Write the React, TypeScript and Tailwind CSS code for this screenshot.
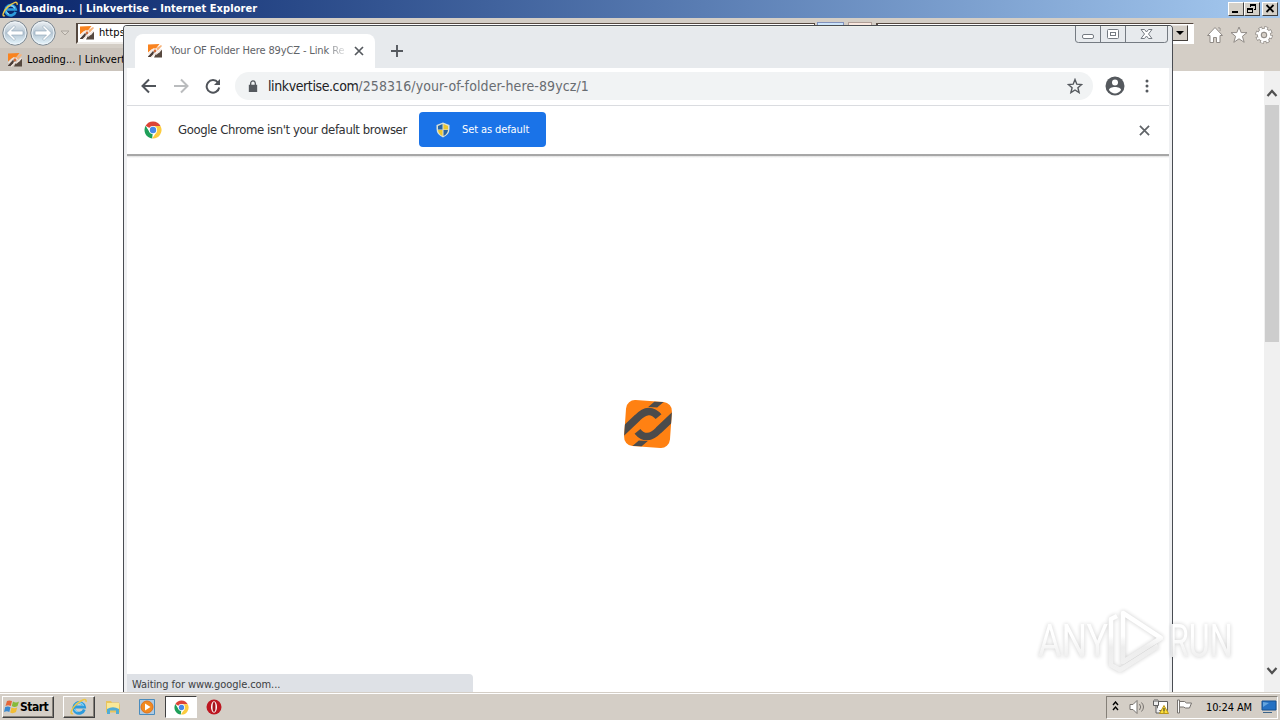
import React from "react";

function LinkIcon({ className = "" }: { className?: string }) {
  return (
    <svg viewBox="0 0 16 16" className={"size-4 shrink-0 " + className}>
      <path d="M1 1.500 12.500 1 9 5.500 5 6 1 9.500z" fill="#f9831f" />
      <path d="M15 14.500H7l2-4 3-.5 3-3.500z" fill="#57493f" />
      <path d="M1 13.500 6 8l2 2-4 4H1z" fill="#4b3d37" />
      <path d="m9.500 5 4.500-3 1 1-4.500 5z" fill="#f6b27a" />
      <path d="M1.500 11 6.500 5.800l2.500.4 1.500 2M14.500 6l-5 5-3-1M4 14.500l4-4" fill="none" stroke="#f3e6de" strokeWidth="1.100" />
      <circle cx="8" cy="8" r="1.400" fill="#ce6b3a" />
    </svg>
  );
}

function IELogo({ className = "" }: { className?: string }) {
  return (
    <svg viewBox="0 0 18 18" className={"shrink-0 " + className}>
      <path d="M14.300 11.500A5.400 5.400 0 1 1 14.500 9H5" fill="none" stroke="#2d9bdc" strokeWidth="2.900" />
      <path d="M13.500 8A4.600 4.600 0 0 0 5 7.500M4.500 11a5 5 0 0 0 3 3" fill="none" stroke="#80d3fa" strokeWidth="1.200" />
      <path d="M3 15.500C-.5 17 1 11 6 6.500S17-1 16 4" fill="none" stroke="#ecc646" strokeWidth="1.500" />
    </svg>
  );
}

function ChromeLogo({ className = "" }: { className?: string }) {
  return (
    <svg viewBox="0 0 18 18" className={"shrink-0 " + className}>
      <path d="M9 9 1.600 4.800A8.500 8.500 0 0 1 16.500 5H9z" fill="#dc4437" />
      <path d="M9 9 8.200 17.460A8.500 8.500 0 0 1 1.600 4.800L5.500 11z" fill="#1e9f59" />
      <path d="M9 9V5h7.500A8.500 8.500 0 0 1 8.200 17.460L12.500 11z" fill="#fccc3f" />
      <circle cx="9" cy="9" r="4.100" fill="#fff" />
      <circle cx="9" cy="9" r="3.200" fill="#4688e8" />
    </svg>
  );
}

function NavCircle({ flip = false }: { flip?: boolean }) {
  return (
    <svg viewBox="0 0 26 26" className={flip ? "size-[26px] -scale-x-100" : "size-[26px]"}>
      <defs>
        <linearGradient id="orb" x2="0" y2="1">
          <stop stopColor="#edf1f4" />
          <stop offset=".5" stopColor="#b5c5d2" />
          <stop offset="1" stopColor="#e8f8ff" />
        </linearGradient>
      </defs>
      <circle cx="13" cy="13" r="12.200" fill="url(#orb)" stroke="#7d8790" />
      <circle cx="13" cy="13" r="11" fill="none" stroke="#eef4f8" />
      <path d="m12 5.500-7.500 7.500 7.500 7.500 1.500-1.500-4-4H21v-4H9.500l4-4z" fill="#fff" stroke="#8ca2b5" strokeWidth=".6" />
    </svg>
  );
}

function IEButton({ kind }: { kind: "min" | "restore" | "close" }) {
  return (
    <div className="flex h-[14px] w-4 items-center justify-center border border-t-white border-l-white border-r-[#404040] border-b-[#404040] bg-[#d4d0c8]">
      <svg viewBox="0 0 14 12" className="h-3 w-[14px] shrink-0" fill="none" stroke="#000" shapeRendering="crispEdges">
        {kind === "min" && <path d="M3 9h6" strokeWidth="2" />}
        {kind === "restore" && <path d="M5.500 4V1.500h5v5H9M5 2h6M2.500 5.500h5v4h-5zM2 6h6" />}
        {kind === "close" && <path d="m3.500 2 7 7m0-7-7 7" strokeWidth="1.800" shapeRendering="auto" />}
      </svg>
    </div>
  );
}

function Explorer() {
  return (
    <div className="flex h-[692px] w-full flex-col">
      <div className="flex h-[18px] items-center bg-linear-to-r from-[#0a246a] to-[#a6caf0] pr-[2px] pl-[2px]">
        <IELogo className="size-[17px]" />
        <span className="flex-1 pt-px text-[11px] font-bold tracking-[0.07px] whitespace-nowrap text-white">Loading... | Linkvertise - Internet Explorer</span>
        <IEButton kind="min" />
        <IEButton kind="restore" />
        <div className="ml-[2px]"><IEButton kind="close" /></div>
      </div>
      <div className="flex h-[30px] items-start bg-[#d4cec6] pt-[2px]">
        <div className="flex w-[76px] shrink-0 items-center gap-[2px] pl-[2px]">
          <NavCircle />
          <NavCircle flip />
          <svg viewBox="0 0 10 7" className="ml-[2px] h-[7px] w-[10px] shrink-0"><path d="m1 1 4 4 4-4z" fill="#ddd8d0" stroke="#aaa49d" /></svg>
        </div>
        <div className="mt-[3px] flex h-[21px] w-[739px] shrink-0 items-center border-2 border-t border-r border-[#55483f] border-b-[#efece8] bg-white">
          <LinkIcon className="ml-px" />
          <span className="ml-1 pt-px text-[11px] tracking-[0.1px]">https:</span>
        </div>
        <div className="mt-[2px] ml-[2px] flex h-3 shrink-0 gap-[4px]">
          <div className="w-[27px] border border-[#8292bc] bg-[#cce5fb]" />
          <div className="w-[24px] border border-[#b09f97] bg-[#f9e8df]" />
        </div>
        <div className="mt-[3px] ml-1 flex h-[21px] w-[318px] shrink-0 justify-end border-2 border-t border-r border-[#55483f] border-r-white border-b-white bg-white">
          <div className="mt-px mr-[5px] flex h-[16px] w-[16px] items-center justify-center border border-[#e9e5e1] border-r-[#45403c] border-b-[#45403c] bg-[#d4cec6]">
            <svg viewBox="0 0 8 5" className="h-[5px] w-2"><path d="M0 0h8L4 4z" /></svg>
          </div>
        </div>
        <div className="mt-[6px] ml-[12px] flex shrink-0 gap-[6px]">
          <svg viewBox="0 0 18 18" className="size-[18px]" fill="#fff" stroke="#908b86"><path d="m1.500 9.500 7.500-8 7.500 8H14v7h-3.500v-5h-3v5H4v-7zM12 2h2v3" /></svg>
          <svg viewBox="0 0 18 18" className="size-[18px]" fill="#fff" stroke="#908b86"><path d="m9 1 2.200 5.600h5.800l-4.600 3.700 1.800 6L9 12.800l-5.200 3.500 1.800-6L1 6.600h5.800z" /></svg>
          <svg viewBox="0 0 18 18" className="ml-px size-[18px]" fill="none">
            <circle cx="9" cy="9" r="5" stroke="#908b86" strokeWidth="4" />
            <circle cx="9" cy="9" r="7" stroke="#908b86" strokeWidth="3.500" strokeDasharray="3.600 1.900" />
            <circle cx="9" cy="9" r="7" stroke="#fff" strokeWidth="2" strokeDasharray="2.400 3.100" strokeDashoffset="-.6" />
            <circle cx="9" cy="9" r="4.700" stroke="#fff" strokeWidth="3" />
            <circle cx="9" cy="9" r="2.700" fill="#d4cec6" stroke="#908b86" />
          </svg>
        </div>
      </div>
      <div className="flex h-[23px] items-center bg-[#d4cec6]">
        <div className="flex h-full w-[180px] items-center bg-[#cbc4bc] pl-[7px]">
          <LinkIcon />
          <span className="ml-1 pt-[2px] text-[11px] tracking-[-0.02px] whitespace-nowrap text-black">Loading... | Linkvertise</span>
        </div>
      </div>
      <div className="flex min-h-0 flex-1 justify-end bg-white">
        <div className="flex w-4 flex-col items-center bg-[#f0f0f0]">
          <svg viewBox="0 0 16 34" className="h-[34px] w-4"><path d="m3.500 25 4.500-5 4.500 5" fill="none" stroke="#505050" strokeWidth="2.200" /></svg>
          <div className="h-[237px] w-[14px] bg-[#cdcdcd]" />
          <div className="flex-1" />
          <svg viewBox="0 0 16 30" className="h-[30px] w-4"><path d="m3.500 6 4.500 5 4.500-5" fill="none" stroke="#505050" strokeWidth="2.200" /></svg>
        </div>
      </div>
    </div>
  );
}

function ChromeTabs() {
  return (
    <div className="flex h-[42px] items-start border-t border-[#eef1ea] bg-[#e7eaed]">
      <div className="mt-[7px] ml-[11px] flex h-[34px] w-[240px] items-center rounded-t-[8px] bg-white pr-[11px] pl-[12px]">
        <LinkIcon />
        <div className="ml-[7px] pt-px text-[11px] tracking-[-0.13px] whitespace-nowrap text-[#5f6368]">
          Your OF Folder Here 89yCZ - Link <span className="bg-linear-to-r from-[#8d9094] to-[#dddedf] bg-clip-text text-transparent">Re</span>
        </div>
        <svg viewBox="0 0 10 10" className="ml-auto size-[10px] shrink-0"><path d="m1 1 8 8m0-8-8 8" stroke="#55595e" strokeWidth="1.700" /></svg>
      </div>
      <svg viewBox="0 0 14 14" className="mt-[17px] ml-[15px] size-[14px]"><path d="M7 1v12M1 7h12" stroke="#55595e" strokeWidth="1.900" /></svg>
      <svg viewBox="0 0 94 18" className="-mt-px mr-[3px] ml-auto h-[18px] w-[94px]" fill="none" stroke="#757b82">
        <path d="M.5 0v14q0 2.500 3 2.500h86q3 0 3-2.500V0M25.500 0v16M50.500 0v16" />
        <rect x="7.500" y="8.500" width="11" height="4" rx="1.500" fill="#fff" />
        <rect x="32.500" y="3.500" width="11" height="9" rx="1" fill="#fff" />
        <rect x="35.500" y="6.500" width="5" height="3" />
        <path d="M66 3.500h3.500l2 2.500 2-2.500H77L73.500 8l3.500 4.500h-3.500l-2-2.500-2 2.500H66L69.500 8z" fill="#fff" />
      </svg>
    </div>
  );
}

function ChromeToolbar() {
  return (
    <div className="flex h-[38px] shrink-0 items-center border-b border-[#dadce0] bg-white pl-[14px]">
      <svg viewBox="0 0 16 16" className="mb-[2px] size-4" fill="none" stroke="#50545a" strokeWidth="2"><path d="M15 8H2m6-6.500L1.500 8 8 14.500" /></svg>
      <svg viewBox="0 0 16 16" className="mb-[2px] ml-4 size-4" fill="none" stroke="#babcbe" strokeWidth="2"><path d="M1 8h13M8 1.500 14.500 8 8 14.500" /></svg>
      <svg viewBox="0 0 16 16" className="mb-[2px] ml-4 size-4"><path d="M13 4.600A6.300 6.300 0 1 0 14.200 9.500" fill="none" stroke="#50545a" strokeWidth="2" /><path d="M15 1v6H9z" fill="#50545a" /></svg>
      <div className="mb-px ml-[14px] flex h-7 w-[858px] items-center rounded-full bg-[#f1f3f4] pr-[10px] pl-[12px]">
        <svg viewBox="0 0 12 14" className="h-[13px] w-3"><path d="M1.500 5h9v8h-9z" fill="#55595e" /><path d="M3.500 6V3.500a2.500 2.500 0 0 1 5 0V6" fill="none" stroke="#55595e" strokeWidth="1.400" /></svg>
        <span className="ml-[9px] text-[14px] tracking-[-0.4px] whitespace-nowrap text-[#202124]">linkvertise.com<span className="tracking-[0.1px] text-[#686c71]">/258316/your-of-folder-here-89ycz/1</span></span>
        <svg viewBox="0 0 16 16" className="ml-auto size-4"><path d="m8 1.500 1.800 4.700 4.900.3-3.800 3.200 1.200 4.900L8 12l-4.100 2.600 1.200-4.900-3.800-3.200 4.900-.3z" fill="none" stroke="#55595e" strokeWidth="1.400" /></svg>
      </div>
      <svg viewBox="0 0 20 20" className="mb-[2px] ml-[12px] size-5"><circle cx="10" cy="10" r="9.500" fill="#55595e" /><circle cx="10" cy="6.500" r="3" fill="#fff" /><path d="M4 14c0-4 12-4 12 0-3 4.500-9 4.500-12 0" fill="#fff" /></svg>
      <svg viewBox="0 0 4 16" className="mb-px ml-[20px] h-4 w-1" fill="#55595e"><circle cx="2" cy="3" r="1.500" /><circle cx="2" cy="8" r="1.500" /><circle cx="2" cy="13" r="1.500" /></svg>
    </div>
  );
}

function DefaultBrowserBar() {
  return (
    <div className="flex h-[50px] shrink-0 items-center border-b-2 border-[#a7a7a7] bg-white pr-[19px] pl-[17px]">
      <ChromeLogo className="size-[18px]" />
      <span className="ml-[16px] w-[241px] text-[13px] tracking-[-0.39px] whitespace-nowrap text-[#303134]">Google Chrome isn't your default browser</span>
      <div className="mb-[1px] flex h-[35px] w-[127px] items-center rounded-[4px] bg-[#1a73e8] pl-[17px] text-white">
        <svg viewBox="0 0 14 16" className="h-4 w-[14px]"><path d="M7 .5 13.500 3v4q0 5.500-6.500 8.500Q.5 12.500.5 7V3z" fill="#dbe1d6" /><path d="M6.500 2v5.500H2V4zM7.500 8H12q-.5 4-4.500 6z" fill="#2865a4" /><path d="M7.500 2v5.500H12V4zM6.500 8H2q.5 4 4.500 6z" fill="#ebc631" /></svg>
        <span className="ml-[12px] pt-px text-[11px] tracking-[-0.1px] whitespace-nowrap">Set as default</span>
      </div>
      <svg viewBox="0 0 12 12" className="ml-auto size-[11px]"><path d="m1 1 10 10m0-10L1 11" stroke="#606468" strokeWidth="1.900" /></svg>
    </div>
  );
}

function ChromeWindow() {
  return (
    <div className="absolute top-[25px] left-[123px] flex h-[667px] w-[1050px] flex-col overflow-hidden rounded-t-[4px] border border-b-0 border-[#494c52] bg-[#eff0f2]">
      <ChromeTabs />
      <div className="mx-[3px] flex min-h-0 flex-1 flex-col bg-white">
        <ChromeToolbar />
        <DefaultBrowserBar />
        <div className="h-[2px] shrink-0 bg-linear-to-b from-[#dedede] to-white" />
        <div className="flex min-h-0 flex-1 flex-col">
          <svg viewBox="0 0 50 50" className="mt-[241px] size-[50px] shrink-0 self-center">
            <defs><clipPath id="tile"><rect x="2" y="2" width="46" height="46" rx="9" /></clipPath></defs>
            <g transform="rotate(4 25 25)">
              <rect x="2" y="2" width="46" height="46" rx="9" fill="#ff8112" />
              <g clipPath="url(#tile)" fill="none" stroke="#4b4b4b" strokeWidth="7.500">
                <path d="M-2 37 14 19.500q11-13 21-2.500" />
                <path d="M52 13 36 30.500q-11 13-21 2.500" />
                <path d="M24 8 30 2h9l-6 6zM26 42l-6 6h-9l6-6z" fill="#4b4b4b" stroke="none" />
              </g>
            </g>
          </svg>
          <div className="mt-auto flex h-[18px] w-[346px] items-center rounded-tr-[4px] bg-[#dee1e6] pt-[4px] pl-[5px] text-[11px] tracking-[-0.08px] text-[#3c4043]">Waiting for www.google.com...</div>
        </div>
      </div>
    </div>
  );
}

function Taskbar() {
  return (
    <div className="flex h-7 items-center border-t border-[#d4cec6] bg-[#d4cec6] pl-[2px] shadow-[inset_0_1px_0_#fff]">
      <div className="mt-[1px] flex h-[22px] w-[52px] items-center border border-t-white border-l-white border-r-[#404040] border-b-[#404040] shadow-[inset_-1px_-1px_0_#858078]">
        <svg viewBox="0 0 16 16" className="ml-[1px] size-4 shrink-0"><path d="M3 2q2-1 5 0L6.800 7Q4 5.500 1.500 7z" fill="#e56738" /><path d="M9 2.500q3 2 6 0L13.500 7q-3 2-5.700 0z" fill="#86ba3a" /><path d="M1.200 8Q4 7 6.500 8.200L5.300 13Q3 11.500 0 13z" fill="#3989d0" /><path d="M7.500 8.500q3 1.500 5.700 0L12 13q-3 2-5.800.5z" fill="#f2bd35" /></svg>
        <span className="text-[12px] font-bold tracking-[-0.5px] text-black">Start</span>
      </div>
      <div className="mt-[1px] ml-[9px] flex h-[22px] w-8 items-center justify-center border border-t-white border-l-white border-r-[#404040] border-b-[#404040] shadow-[inset_-1px_-1px_0_#858078]"><IELogo className="size-[18px]" /></div>
      <svg viewBox="0 0 18 18" className="mt-[1px] ml-[9px] size-[18px]"><path d="M2 3h5l1 1.500h7l1 3v7H2z" fill="#e8c45d" /><path d="M3 5h12v6H3z" fill="#f9e898" /><path d="M3 16v-5q6-3.500 12 0v5h-3v-3.500H6V16z" fill="#50acd5" /></svg>
      <svg viewBox="0 0 18 18" className="mt-[1px] ml-[16px] size-[18px]"><path d="M1.500 1.500h15v15h-15z" fill="#aecae2" stroke="#4a8cbd" /><circle cx="9" cy="9" r="6" fill="#f28a20" stroke="#de721b" /><path d="m7 5.500 5.500 3.500L7 12.500z" fill="#fff" /></svg>
      <div className="mt-[1px] ml-[9px] flex h-[22px] w-8 items-center justify-center border border-t-[#404040] border-l-[#404040] border-r-white border-b-white bg-white"><ChromeLogo className="size-[15px]" /></div>
      <svg viewBox="0 0 16 16" className="mt-[1px] ml-[9px] size-4"><circle cx="8" cy="8" r="7.500" fill="#bd1721" /><ellipse cx="8" cy="8" rx="3" ry="5.700" fill="#fff" /><ellipse cx="8" cy="8" rx="1.500" ry="4.900" fill="#a4141c" /></svg>
      <div className="mt-[1px] mr-[2px] ml-auto flex h-[23px] w-[172px] items-center border border-t-[#858078] border-l-[#858078] border-r-white border-b-white pl-[5px]">
        <svg viewBox="0 0 7 10" className="mb-[2px] h-[10px] w-[7px]" fill="none" stroke="#000" strokeWidth="1.400"><path d="m1 4 2.500-3L6 4M1 9l2.500-3L6 9" /></svg>
        <svg viewBox="0 0 18 16" className="ml-[9px] h-4 w-[18px]" fill="none" stroke="#77736f"><path d="M2 5.500h3l4-4v13l-4-4H2z" fill="#fff" /><path d="M11.500 5q2.500 3 0 6M13.500 3.500q4 4.500 0 9" /></svg>
        <svg viewBox="0 0 18 18" className="ml-[6px] size-[18px]" fill="#fff" stroke="#5f5f5f"><path d="M5.500 3.500h10v9h-10z" /><path d="M1.500 2.500v5h5v-5M3 1v3M5 1v3M4 8v7h5" fill="#eee" /><path d="m12 7.500-4.500 8h9z" fill="#ffe03a" stroke="#b99518" /><path d="M12 10v3M12 13.500v1" stroke="#222" /></svg>
        <svg viewBox="0 0 18 18" className="ml-[6px] size-[18px]" fill="#fff" stroke="#77736f"><path d="M1.500 15V2h2v13zM3.500 3.500h5l2 1.500h5l-2 5h-4l-2-1h-4z" /></svg>
        <span className="ml-[12px] pt-[2px] text-[11px] tracking-[-0.12px] whitespace-nowrap text-black">10:24 AM</span>
        <svg viewBox="0 0 16 14" className="ml-auto h-[14px] w-4"><path d="M1 1h14v9H1z" fill="#2571c3" stroke="#17518f" /><path d="m2 2 6 1-6 4z" fill="#65a5de" /><path d="M2 12.500h9" stroke="#3b6388" /></svg>
      </div>
    </div>
  );
}

function Watermark() {
  return (
    <div className="absolute top-[607px] left-[1038px] flex h-[68px] w-[200px] items-center opacity-90 drop-shadow-[0_0_2px_rgba(0,0,0,0.22)]">
      <span className="-mr-[24px] w-[92px] shrink-0 origin-left scale-x-[0.780] bg-linear-to-b from-white from-40% to-[#e9e9e9] bg-clip-text font-['Roboto','Liberation_Sans',sans-serif] text-[46px] leading-none text-transparent">ANY</span>
      <svg viewBox="0 0 60 68" className="h-[68px] w-[60px] shrink-0" fill="none" strokeLinejoin="round">
        <defs><linearGradient id="mark" x2="0" y2="1"><stop stopColor="#fff" /><stop offset=".4" stopColor="#fff" /><stop offset=".6" stopColor="#ececec" /><stop offset="1" stopColor="#f0f0f0" /></linearGradient></defs>
        <path d="M17 47V6l38 25-38 24zM11 9l-6 3v46l9 5 38-24" stroke="url(#mark)" strokeWidth="4.500" />
      </svg>
      <span className="ml-[3px] w-[92px] shrink-0 origin-left scale-x-[0.700] bg-linear-to-b from-white from-40% to-[#e9e9e9] bg-clip-text font-['Roboto','Liberation_Sans',sans-serif] text-[46px] leading-none text-transparent">RUN</span>
    </div>
  );
}

export default function App() {
  return (
    <main className="relative h-[720px] w-[1280px] overflow-hidden bg-white font-['DejaVu_Sans_Condensed','DejaVu_Sans','Liberation_Sans',sans-serif]">
      <Explorer />
      <Taskbar />
      <ChromeWindow />
      <Watermark />
    </main>
  );
}
